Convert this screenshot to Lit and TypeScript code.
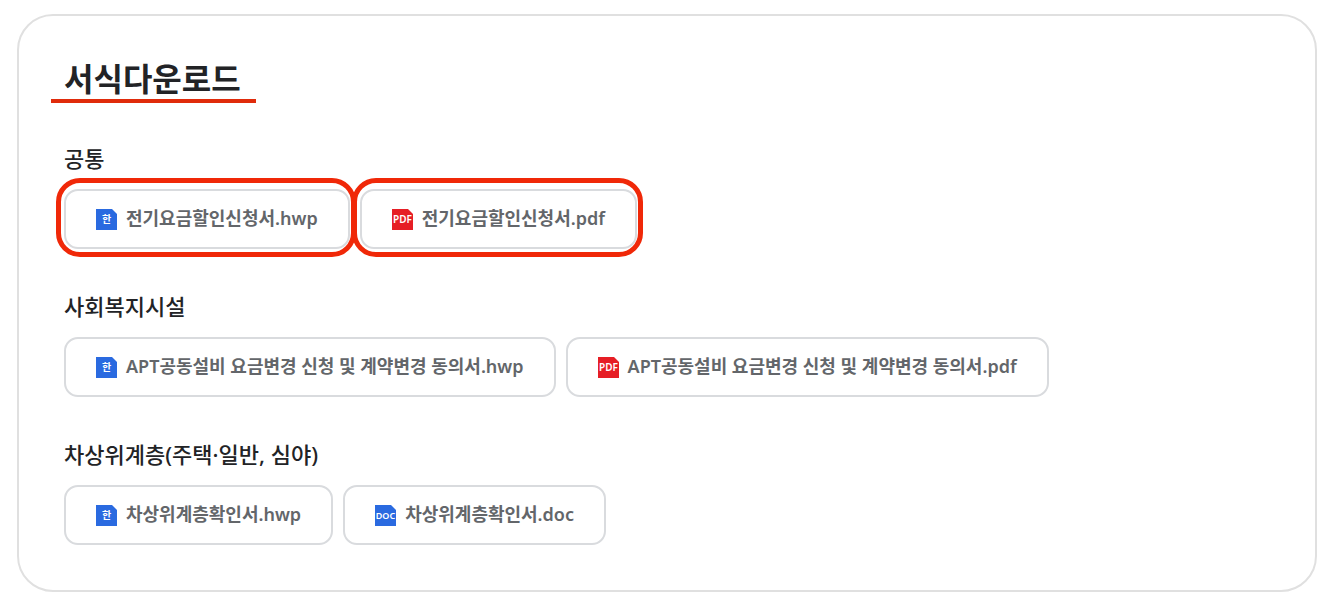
import { LitElement, html, svg, css } from "lit";
import { customElement, property } from "lit/decorators.js";

type Kind = "hwp" | "pdf" | "doc";

interface FormFile {
  name: string;
  kind: Kind;
  marked?: boolean;
}

interface FormGroup {
  title: string;
  files: FormFile[];
}

const GROUPS: FormGroup[] = [
  {
    title: "공통",
    files: [
      { name: "전기요금할인신청서.hwp", kind: "hwp", marked: true },
      { name: "전기요금할인신청서.pdf", kind: "pdf", marked: true },
    ],
  },
  {
    title: "사회복지시설",
    files: [
      { name: "APT공동설비 요금변경 신청 및 계약변경 동의서.hwp", kind: "hwp" },
      { name: "APT공동설비 요금변경 신청 및 계약변경 동의서.pdf", kind: "pdf" },
    ],
  },
  {
    title: "차상위계층(주택·일반, 심야)",
    files: [
      { name: "차상위계층확인서.hwp", kind: "hwp" },
      { name: "차상위계층확인서.doc", kind: "doc" },
    ],
  },
];

const BADGES: Record<Kind, { label: string; fill: string; size: number }> = {
  hwp: { label: "한", fill: "#2a6ae0", size: 10 },
  pdf: { label: "PDF", fill: "#e61e25", size: 10 },
  doc: { label: "DOC", fill: "#2a6ae0", size: 9 },
};

@customElement("file-badge")
export class FileBadge extends LitElement {
  @property() kind: Kind = "hwp";

  static styles = css`
    :host {
      display: block;
      flex: none;
      width: 21px;
      height: 21px;
    }
    .badge {
      display: block;
      width: 100%;
      height: 100%;
    }
    .label {
      fill: #fff;
      font-family: "Noto Sans", "Noto Sans CJK KR", sans-serif;
      font-weight: 600;
      text-anchor: middle;
    }
  `;

  render() {
    const badge = BADGES[this.kind];
    return html`
      <svg class="badge" viewBox="0 0 21 21" aria-hidden="true">
        ${svg`
          <path d="M0 0H16L21 5V21H0Z" fill=${badge.fill}></path>
          <text class="label" x="10.5" y="14" font-size=${badge.size}>${badge.label}</text>
        `}
      </svg>
    `;
  }
}

@customElement("app-root")
export class AppRoot extends LitElement {
  static styles = css`
    :host {
      display: block;
      padding: 14px 14px 10px 17px;
      background: #fff;
      color: #222326;
      font-family: "Noto Sans", "Noto Sans CJK KR", sans-serif;
    }
    .card {
      padding: 42px 45px 45px;
      border: 2px solid #e0e0e0;
      border-radius: 36px;
    }
    .title {
      position: relative;
      width: fit-content;
      margin: 0;
      font-size: 32px;
      font-weight: 700;
      line-height: 42px;
    }
    .title::after {
      content: "";
      position: absolute;
      inset: auto -15px -3px -13px;
      height: 4px;
      background: #e02b0b;
    }
    .groups {
      display: grid;
      gap: 43px;
      margin-top: 44px;
    }
    .group-title {
      margin: 0 0 17px;
      font-size: 22px;
      font-weight: 500;
      line-height: 28px;
    }
    .files {
      display: flex;
      flex-wrap: wrap;
      gap: 10px;
      margin: 0;
      padding: 0;
      list-style: none;
    }
    .file {
      position: relative;
      display: flex;
      align-items: center;
      gap: 9px;
      box-sizing: border-box;
      min-height: 60px;
      padding: 0 30px;
      border: 2px solid #d9dbde;
      border-radius: 14px;
      color: #63666a;
      font-size: 18px;
      font-weight: 600;
      line-height: 26px;
      text-decoration: none;
    }
    .name {
      padding-bottom: 2px;
    }
    .marked::after {
      content: "";
      position: absolute;
      inset: -13px -8px -10px -10px;
      border: 5px solid #f02808;
      border-radius: 24px;
      pointer-events: none;
    }
  `;

  render() {
    return html`
      <main class="card">
        <h1 class="title">서식다운로드</h1>
        <div class="groups">
          ${GROUPS.map(
            (group) => html`
              <section>
                <h2 class="group-title">${group.title}</h2>
                <ul class="files">
                  ${group.files.map(
                    (file) => html`
                      <li>
                        <a class="file ${file.marked ? "marked" : ""}" href="#" download>
                          <file-badge .kind=${file.kind}></file-badge>
                          <span class="name">${file.name}</span>
                        </a>
                      </li>
                    `
                  )}
                </ul>
              </section>
            `
          )}
        </div>
      </main>
    `;
  }
}
